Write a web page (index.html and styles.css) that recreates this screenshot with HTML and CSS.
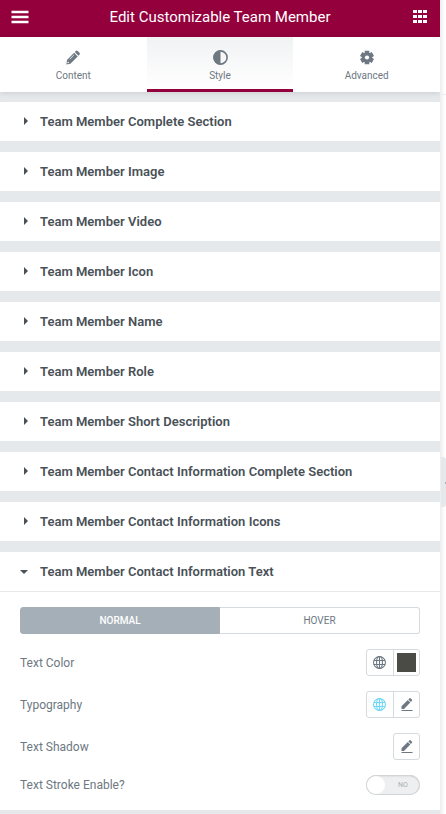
FILE: index.html
```html
<!DOCTYPE html>
<html lang="en">
<head>
<meta charset="utf-8">
<title>Edit Customizable Team Member</title>
<link rel="stylesheet" href="styles.css">
</head>
<body>
<svg class="defs" width="0" height="0">
  <symbol id="globe" viewBox="0 0 12 12"><g fill="none" stroke="currentColor"><circle cx="6" cy="6" r="5.500"/><ellipse cx="6" cy="6" rx="2.700" ry="5.500"/><path d="M.8 4.200h10.400M.8 7.800h10.400M6 .6v10.800"/></g></symbol>
  <symbol id="edit" viewBox="0 0 12 14"><path d="M.5 8.200 6.800 2l2.500 2.500L3 10.900H.5zM7.400 1.400 8.500.3q.5-.4 1 0l1.500 1.500q.4.500 0 1L9.900 3.900zM.5 12h11v1H.5z" fill="currentColor"/></symbol>
</svg>
<div class="app">
<main class="panel">
  <header class="header">
    <svg class="menu" width="18" height="12" viewBox="0 0 18 12"><path d="M.5 1h17M.5 6h17M.5 11h17" stroke="#fff" stroke-width="2.300"/></svg>
    <h1>Edit Customizable Team Member</h1>
    <svg class="apps" width="14" height="13" viewBox="0 0 14 13" fill="#fff"><path d="M0 0h4v3H0zM5 0h4v3H5zM10 0h4v3h-4zM0 5h4v3H0zM5 5h4v3H5zM10 5h4v3h-4zM0 10h4v3H0zM5 10h4v3H5zM10 10h4v3h-4z"/></svg>
  </header>
  <nav class="nav">
    <div class="nav-item"><svg width="14" height="14" viewBox="0 0 14 14" fill="currentColor"><path fill-rule="evenodd" d="m8.100 2.300 3.600 3.600L4.400 13.200l-4 .7.600-4.300zM7.800 4.200 3.500 8.500l.4.400 4.300-4.300zM1.700 11.200l-.3 1.500 1.500-.3-.1-1.100zM8.800 1.600 9.900.5q.9-.8 1.800 0l1.800 1.800q.8.900 0 1.700l-1.100 1.200z"/></svg><span>Content</span></div>
    <div class="nav-item active"><svg width="15" height="15" viewBox="0 0 15 15"><circle cx="7.500" cy="7.500" r="6.600" fill="none" stroke="currentColor" stroke-width="1.600"/><path d="M7.500.5a7 7 0 0 0 0 14z" fill="currentColor"/></svg><span>Style</span></div>
    <div class="nav-item"><svg width="14" height="14" viewBox="0 0 14 14"><g stroke="currentColor" stroke-width="4.600"><path d="M7 .2v13.600M1.100 3.600l11.800 6.800M1.100 10.400l11.800-6.800"/></g><circle cx="7" cy="7" r="5.200" fill="currentColor"/><circle cx="7" cy="7" r="2.100" fill="#fff"/></svg><span>Advanced</span></div>
  </nav>
  <div class="sections">
    <section><h2><i></i>Team Member Complete Section</h2></section>
    <section><h2><i></i>Team Member Image</h2></section>
    <section><h2><i></i>Team Member Video</h2></section>
    <section><h2><i></i>Team Member Icon</h2></section>
    <section><h2><i></i>Team Member Name</h2></section>
    <section><h2><i></i>Team Member Role</h2></section>
    <section><h2><i></i>Team Member Short Description</h2></section>
    <section><h2><i></i>Team Member Contact Information Complete Section</h2></section>
    <section><h2><i></i>Team Member Contact Information Icons</h2></section>
    <section class="open">
      <h2><i></i>Team Member Contact Information Text</h2>
      <div class="controls">
        <div class="tabs"><span class="selected">NORMAL</span><span>HOVER</span></div>
        <div class="row"><span>Text Color</span><div class="buttons"><b><svg width="13" height="13"><use href="#globe"/></svg></b><b><em class="swatch"></em></b></div></div>
        <div class="row"><span>Typography</span><div class="buttons"><b class="linked"><svg width="13" height="13"><use href="#globe"/></svg></b><b><svg width="12" height="14"><use href="#edit"/></svg></b></div></div>
        <div class="row"><span>Text Shadow</span><div class="buttons single"><b><svg width="12" height="14"><use href="#edit"/></svg></b></div></div>
        <div class="row switch-row"><span>Text Stroke Enable?</span><div class="switch"><em></em><span>NO</span></div></div>
      </div>
    </section>
  </div>
</main>
<aside class="preview"><div class="preview-top"></div><div class="handle"><svg width="1" height="2" viewBox="0 0 1 2"><path d="M0 0h1v2H0z" fill="#a9afb5"/></svg></div></aside>
</div>
</body>
</html>
```

FILE: styles.css
```css
* { box-sizing: border-box; }
body { margin: 0; font-family: Roboto, "Liberation Sans", sans-serif; color: #6d7882; background: #fff; overflow: hidden; }
svg { display: block; }
.defs { position: absolute; }
.app { display: flex; width: 446px; height: 814px; }
.panel { width: 440px; flex: none; height: 814px; background: #e6e9ec; }
.header { height: 37px; background: #93003c; color: #fff; display: flex; align-items: center; justify-content: space-between; padding: 0 13px 4px 11px; }
.header h1 { margin: 0 2px 0 0; font-size: 15px; font-weight: 400; line-height: 18px; }
.header .menu { margin-top: 1px; overflow: visible; }
.header .apps { margin-top: 0; }
.nav { height: 55px; display: flex; background: #fff; box-shadow: 0 1px 6px rgba(0, 0, 0, .12); }
.nav-item { flex: 1; display: flex; flex-direction: column; align-items: center; padding-top: 13px; font-size: 10px; line-height: 12px; }
.nav-item svg { height: 15px; }
.nav-item span { margin-top: 5px; }
.nav-item.active { background: linear-gradient(#f1f2f4, #fff); border-bottom: 3px solid #93003c; }
.sections { display: flex; flex-direction: column; gap: 11px; padding-top: 10px; }
.sections section { background: #fff; }
h2 { margin: 0; height: 39px; display: flex; align-items: center; padding-left: 20px; font-size: 13px; font-weight: 600; letter-spacing: .015px; color: #495157; }
h2 i { width: 20px; height: 8px; }
h2 i::before { content: ""; display: block; width: 0; margin: -.5px 0 0 4px; border: solid transparent; border-width: 4px 0 4px 4px; border-left-color: #495157; }
.open h2 i::before { margin: 2px 0 0; border-width: 4px 4px 0; border-color: #495157 transparent transparent; }
.controls { height: 219px; border-top: 1px solid #e6e9ec; padding: 15px 20px 0; font-size: 12px; }
.tabs { display: flex; height: 27px; font-size: 10px; line-height: 25px; text-align: center; }
.tabs span { width: 50%; border: 1px solid #d5dadf; border-left: 0; border-radius: 0 3px 3px 0; }
.tabs .selected { background: #a4afb7; color: #fff; font-weight: 500; border: 1px solid #a4afb7; border-radius: 3px 0 0 3px; }
.row { display: flex; align-items: center; justify-content: space-between; height: 27px; margin-top: 15px; }
.buttons { display: flex; height: 27px; border: 1px solid #d5dadf; border-radius: 3px; }
.buttons b { width: 26px; display: flex; align-items: center; justify-content: center; }
.buttons.single b { width: 25px; }
.buttons b:first-child:not(:last-child) { padding-right: 1px; }
.buttons b + b { border-left: 1px solid #d5dadf; }
.linked { color: #71d7f7; }
.swatch { width: 19px; height: 19px; background: #494b44; }
.switch-row { height: 20px; }
.switch { width: 54px; height: 20px; border-radius: 10px; background: #edeff0; box-shadow: inset 0 0 0 1px #d2d5d7, inset 0 1px 2px #c4c8ca; display: flex; align-items: center; padding-left: 1px; }
.switch em { width: 18px; height: 18px; border-radius: 50%; background: #fff; }
.switch span { margin-left: 13px; font-size: 7px; color: #a4afb7; }
.preview { width: 6px; background: linear-gradient(90deg, #ededed, #fff 5px); }
.preview-top { height: 95px; border-bottom: 1px solid #ededed; }
.handle { margin: 362px 0 0 1px; height: 50px; background: #e6e9ec; border-radius: 0 3px 3px 0; padding: 25px 0 0 4px; }
```
